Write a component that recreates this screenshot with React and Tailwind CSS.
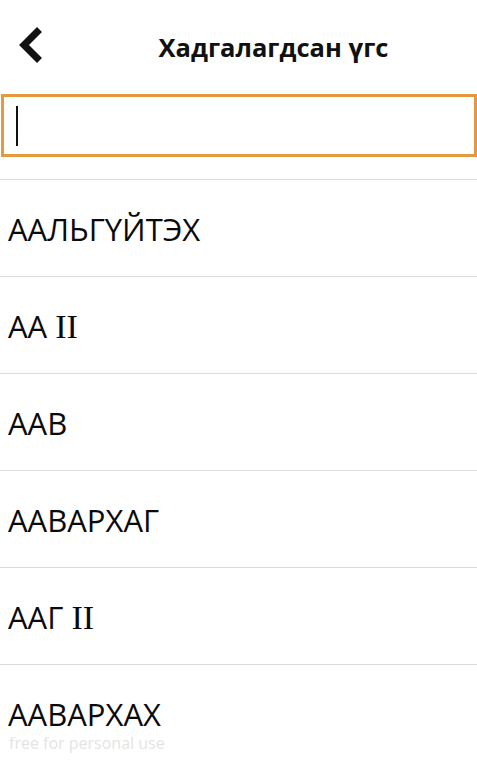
import React from "react";

const items = [
  { t: "ААЛЬГҮЙТЭХ" },
  { t: "АА", r: "II" },
  { t: "ААВ" },
  { t: "ААВАРХАГ" },
  { t: "ААГ", r: "II" },
  { t: "ААВАРХАХ" },
];

export default function App() {
  return (
    <div className="relative w-[477px] h-[760px] overflow-hidden bg-white" style={{ fontFamily: '"Open Sans", "Noto Sans", sans-serif' }}>
      <div className="h-[94px] flex items-center relative">
        <svg className="absolute left-[18px] top-[27px]" width="26" height="36" viewBox="0 0 26 36">
          <path d="M21.5 2.5 L6 18 L21.5 33.5" fill="none" stroke="#111" strokeWidth="7" strokeLinejoin="miter" />
        </svg>
        <div className="w-full text-center pl-[70px] text-[25.5px] font-bold text-[#111]">Хадгалагдсан үгс</div>
      </div>
      <div className="ml-[1px] h-[63px] border-[3px] border-[#e39a3e] bg-white flex items-center pl-[12px]">
        <div className="w-[2px] h-[40px] bg-[#111]" />
      </div>
      <div className="h-[22px]" />
      {items.map((it, i) => (
        <div key={i} className="h-[97px] border-t border-[#dcdcdc] flex items-center pl-[8px] text-[31px] text-[#0a0a0a] pt-[2px]">
          <span>
            {it.t}
            {it.r && <>{" "}<span style={{ fontFamily: '"Liberation Serif", serif' }} className="text-[34px]">{it.r}</span></>}
          </span>
        </div>
      ))}
      <div className="absolute left-[9px] top-[731px] text-[16px] text-[#e4e4e4]">free for personal use</div>
    </div>
  );
}
